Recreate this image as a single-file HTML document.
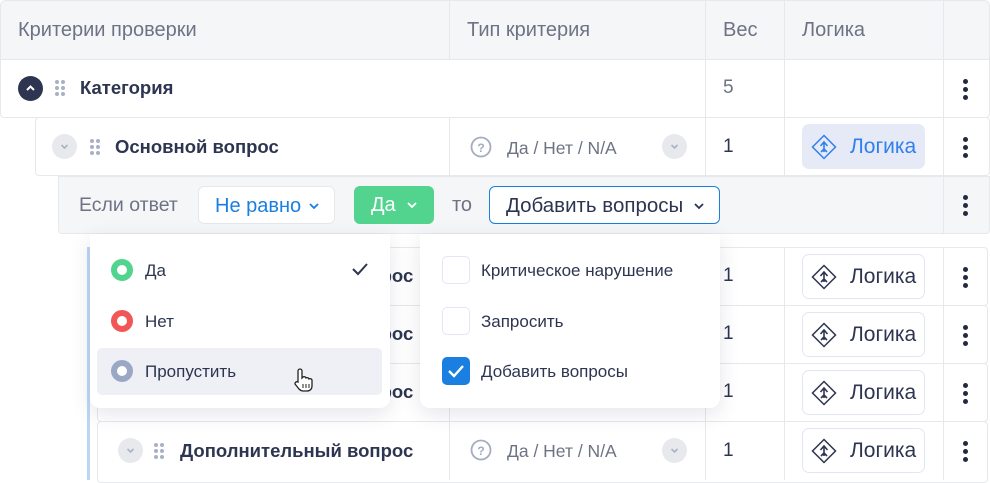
<!DOCTYPE html>
<html><head><meta charset="utf-8"><style>
*{box-sizing:border-box;margin:0;padding:0}
body{width:990px;height:480px;overflow:hidden;background:#fff;font-family:"Liberation Sans",sans-serif;position:relative;color:#2d3550}
.a{position:absolute}
.t{position:absolute;font-size:19px;white-space:nowrap;line-height:20px}
.h{font-size:20px;color:#6d7384}
.s{font-size:17px}
.vl{position:absolute;width:1px;background:#e6e8ec}
.b{font-weight:bold;font-size:18.5px}
.kb{position:absolute;width:5px;left:963px}
.kb i{display:block;width:5px;height:5px;border-radius:50%;background:#232a40;margin-bottom:3px}
.dr{position:absolute;width:10px;height:16px;display:grid;grid-template-columns:4px 4px;gap:2px 2px}
.dr i{display:block;width:4px;height:4px;border-radius:50%;background:#a9b1c6}
.circ{position:absolute;width:25px;height:25px;border-radius:50%;background:#e8e9ec}
.lg{position:absolute;left:802px;width:123px;height:45px;border:1px solid #e2e6f3;border-radius:7px;background:#fff}
.lg .t{font-size:21px}
.row{position:absolute;border:1px solid #e6e8ec;background:#fff;border-radius:4px}
</style></head><body>
<div class="a" style="left:0;top:0;width:990px;height:60px;background:#f5f6f8;border:1px solid #e6e8ec;border-radius:6px 6px 0 0"></div>
<div class="t h" style="left:18px;top:20px">Критерии проверки</div>
<div class="t h" style="left:467px;top:20px">Тип критерия</div>
<div class="t h" style="left:723px;top:20px">Вес</div>
<div class="t h" style="left:802px;top:20px">Логика</div>
<div class="vl" style="left:449px;top:0;height:60px"></div>
<div class="vl" style="left:705px;top:0;height:60px"></div>
<div class="vl" style="left:784px;top:0;height:60px"></div>
<div class="vl" style="left:943px;top:0;height:60px"></div>
<div class="row" style="left:0;top:59px;width:990px;height:59px;border-radius:0 0 4px 4px"></div>
<div class="vl" style="left:705px;top:60px;height:58px"></div>
<div class="vl" style="left:784px;top:60px;height:58px"></div>
<div class="vl" style="left:943px;top:60px;height:58px"></div>
<div class="circ" style="left:18px;top:76px;background:#2d3550"><svg width="25" height="25"><path d="M9 14l3.5-3.5L16 14" stroke="#fff" stroke-width="2" fill="none"/></svg></div>
<div class="dr" style="left:55px;top:80px"><i></i><i></i><i></i><i></i><i></i><i></i></div>
<div class="t b" style="left:80px;top:78px">Категория</div>
<div class="t" style="left:723px;top:78px;color:#6d7384">5</div>
<div class="kb" style="top:79px"><i></i><i></i><i></i></div>
<div class="row" style="left:35px;top:117px;width:955px;height:59px"></div>
<div class="vl" style="left:449px;top:118px;height:58px"></div>
<div class="vl" style="left:705px;top:118px;height:58px"></div>
<div class="vl" style="left:784px;top:118px;height:58px"></div>
<div class="vl" style="left:943px;top:118px;height:58px"></div>
<div class="circ" style="left:52px;top:134px"><svg width="25" height="25"><path d="M9.5 11l3 3 3-3" stroke="#a9b1c6" stroke-width="1.6" fill="none"/></svg></div>
<div class="dr" style="left:90px;top:139px"><i></i><i></i><i></i><i></i><i></i><i></i></div>
<div class="t b" style="left:115px;top:137px">Основной вопрос</div>
<svg class="a" style="left:470px;top:136px" width="22" height="22"><circle cx="11" cy="11" r="9.5" stroke="#a4acc2" stroke-width="1.8" fill="none"/><text x="11" y="16" font-size="12" font-weight="bold" text-anchor="middle" fill="#a4acc2" font-family="Liberation Sans">?</text></svg>
<div class="t" style="left:507px;top:138px;font-size:17.5px;color:#6d7384">Да / Нет / N/A</div>
<div class="circ" style="left:662px;top:134px"><svg width="25" height="25"><path d="M9.5 11l3 3 3-3" stroke="#a9b1c6" stroke-width="1.6" fill="none"/></svg></div>
<div class="t" style="left:723px;top:137px">1</div>
<div class="lg" style="top:124px;background:#e6eaf7;border-color:#e6eaf7"><svg class="a" style="left:8px;top:9px" width="26" height="26"><path d="M13 1.5L24.5 13 13 24.5 1.5 13z" stroke="#2f80ed" stroke-width="1.5" fill="none"/><path d="M13 8v10M9.5 12l3.5-4 3.5 4M13 15l-3 3M13 15l3 3" stroke="#2f80ed" stroke-width="1.6" fill="none"/></svg><div class="t" style="left:47px;top:12px;color:#2f80ed">Логика</div></div>
<div class="kb" style="top:137px"><i></i><i></i><i></i></div>
<div class="a" style="left:58px;top:176px;width:932px;height:58px;background:#f5f6f8;border:1px solid #e6e8ec;border-radius:0 0 4px 4px"></div>
<div class="vl" style="left:943px;top:176px;height:58px"></div>
<div class="t" style="left:79px;top:195px;color:#6d7384;font-size:19.5px">Если ответ</div>
<div class="a" style="left:198px;top:186px;width:137px;height:38px;background:#fff;border:1px solid #e6e8ec;border-radius:6px"><div class="t" style="left:16px;top:9px;color:#1a7fe0;font-size:20px">Не равно</div><svg class="a" style="left:109px;top:14px" width="12" height="10"><path d="M2 3l4 4 4-4" stroke="#1a7fe0" stroke-width="1.8" fill="none"/></svg></div>
<div class="a" style="left:354px;top:186px;width:80px;height:38px;background:#52d48f;border-radius:6px"><div class="t" style="left:17px;top:9px;color:#fff;font-size:20px">Да</div><svg class="a" style="left:52px;top:14px" width="12" height="10"><path d="M2 3l4 4 4-4" stroke="#fff" stroke-width="1.8" fill="none"/></svg></div>
<div class="t" style="left:452px;top:195px;color:#6d7384;font-size:20px">то</div>
<div class="a" style="left:489px;top:186px;width:231px;height:38px;background:#fff;border:1.5px solid #1a7fe0;border-radius:6px"><div class="t" style="left:16px;top:9px;font-size:20.5px">Добавить вопросы</div><svg class="a" style="left:203px;top:14px" width="12" height="10"><path d="M2 3l4 4 4-4" stroke="#2d3550" stroke-width="1.8" fill="none"/></svg></div>
<div class="kb" style="top:195px"><i></i><i></i><i></i></div>
<div class="a" style="left:87px;top:247px;width:3px;height:233px;background:#bcd7f6"></div>
<div class="row" style="left:97px;top:247px;width:891px;height:59px"></div>
<div class="row" style="left:97px;top:305px;width:891px;height:59px"></div>
<div class="row" style="left:97px;top:363px;width:891px;height:59px"></div>
<div class="row" style="left:97px;top:421px;width:891px;height:62px"></div>
<div class="vl" style="left:449px;top:247px;height:233px"></div>
<div class="vl" style="left:705px;top:247px;height:233px"></div>
<div class="vl" style="left:784px;top:247px;height:233px"></div>
<div class="vl" style="left:943px;top:247px;height:233px"></div>
<div class="t b" style="left:180px;top:266px">Дополнительный вопрос</div>
<div class="t b" style="left:180px;top:324px">Дополнительный вопрос</div>
<div class="t b" style="left:180px;top:382px">Дополнительный вопрос</div>
<div class="t" style="left:723px;top:266px">1</div>
<div class="t" style="left:723px;top:324px">1</div>
<div class="t" style="left:723px;top:382px">1</div>
<div class="circ" style="left:118px;top:438px"><svg width="25" height="25"><path d="M9.5 11l3 3 3-3" stroke="#a9b1c6" stroke-width="1.6" fill="none"/></svg></div>
<div class="dr" style="left:154px;top:443px"><i></i><i></i><i></i><i></i><i></i><i></i></div>
<div class="t b" style="left:180px;top:441px">Дополнительный вопрос</div>
<svg class="a" style="left:470px;top:439px" width="22" height="22"><circle cx="11" cy="11" r="9.5" stroke="#a4acc2" stroke-width="1.8" fill="none"/><text x="11" y="16" font-size="12" font-weight="bold" text-anchor="middle" fill="#a4acc2" font-family="Liberation Sans">?</text></svg>
<div class="t" style="left:507px;top:441px;font-size:17.5px;color:#6d7384">Да / Нет / N/A</div>
<div class="circ" style="left:662px;top:438px"><svg width="25" height="25"><path d="M9.5 11l3 3 3-3" stroke="#a9b1c6" stroke-width="1.6" fill="none"/></svg></div>
<div class="t" style="left:723px;top:441px">1</div>
<div class="lg" style="top:254px"><svg class="a" style="left:8px;top:9px" width="26" height="26"><path d="M13 1.5L24.5 13 13 24.5 1.5 13z" stroke="#2d3550" stroke-width="1.5" fill="none"/><path d="M13 8v10M9.5 12l3.5-4 3.5 4M13 15l-3 3M13 15l3 3" stroke="#2d3550" stroke-width="1.6" fill="none"/></svg><div class="t" style="left:47px;top:12px">Логика</div></div>
<div class="lg" style="top:312px"><svg class="a" style="left:8px;top:9px" width="26" height="26"><path d="M13 1.5L24.5 13 13 24.5 1.5 13z" stroke="#2d3550" stroke-width="1.5" fill="none"/><path d="M13 8v10M9.5 12l3.5-4 3.5 4M13 15l-3 3M13 15l3 3" stroke="#2d3550" stroke-width="1.6" fill="none"/></svg><div class="t" style="left:47px;top:12px">Логика</div></div>
<div class="lg" style="top:370px"><svg class="a" style="left:8px;top:9px" width="26" height="26"><path d="M13 1.5L24.5 13 13 24.5 1.5 13z" stroke="#2d3550" stroke-width="1.5" fill="none"/><path d="M13 8v10M9.5 12l3.5-4 3.5 4M13 15l-3 3M13 15l3 3" stroke="#2d3550" stroke-width="1.6" fill="none"/></svg><div class="t" style="left:47px;top:12px">Логика</div></div>
<div class="lg" style="top:428px"><svg class="a" style="left:8px;top:9px" width="26" height="26"><path d="M13 1.5L24.5 13 13 24.5 1.5 13z" stroke="#2d3550" stroke-width="1.5" fill="none"/><path d="M13 8v10M9.5 12l3.5-4 3.5 4M13 15l-3 3M13 15l3 3" stroke="#2d3550" stroke-width="1.6" fill="none"/></svg><div class="t" style="left:47px;top:12px">Логика</div></div>
<div class="kb" style="top:267px"><i></i><i></i><i></i></div>
<div class="kb" style="top:325px"><i></i><i></i><i></i></div>
<div class="kb" style="top:383px"><i></i><i></i><i></i></div>
<div class="kb" style="top:441px"><i></i><i></i><i></i></div>
<div class="a" style="left:90px;top:234px;width:300px;height:174px;background:#fff;border-radius:0 0 10px 10px;box-shadow:0 6px 20px rgba(40,50,80,.12)"></div>
<div class="a" style="left:97px;top:348px;width:285px;height:47px;background:#eef0f5;border-radius:5px"></div>
<div class="a" style="left:111px;top:259px;width:22px;height:22px;border-radius:50%;border:6px solid #52d48f;background:#fff"></div>
<div class="t s" style="left:145px;top:261px">Да</div>
<svg class="a" style="left:351px;top:261px" width="18" height="16"><path d="M2 8l5 5 9-10" stroke="#2d3550" stroke-width="2" fill="none"/></svg>
<div class="a" style="left:111px;top:310px;width:22px;height:22px;border-radius:50%;border:6px solid #f25757;background:#fff"></div>
<div class="t s" style="left:145px;top:312px">Нет</div>
<div class="a" style="left:111px;top:360px;width:22px;height:22px;border-radius:50%;border:6px solid #9ba8c5;background:#fff"></div>
<div class="t s" style="left:145px;top:362px">Пропустить</div>
<svg class="a" style="left:291px;top:367px" width="24" height="26"><path d="M7 13V4a2 2 0 014 0v7l1-1a2 2 0 013 1 2 2 0 013 1 2 2 0 013 1v6c0 3-2 5-5 5h-4c-2 0-3-1-4-2l-4-5a2 2 0 013-2z" fill="#fff" stroke="#222" stroke-width="1.3"/><path d="M12 17v4M15 17v4M18 17v4" stroke="#222" stroke-width="1"/></svg>
<div class="a" style="left:420px;top:234px;width:300px;height:174px;background:#fff;border-radius:0 0 10px 10px;box-shadow:0 6px 20px rgba(40,50,80,.12)"></div>
<div class="a" style="left:442px;top:256px;width:28px;height:28px;border:1.5px solid #e3e7f3;border-radius:5px"></div>
<div class="t s" style="left:481px;top:261px">Критическое нарушение</div>
<div class="a" style="left:442px;top:307px;width:28px;height:28px;border:1.5px solid #e3e7f3;border-radius:5px"></div>
<div class="t s" style="left:481px;top:312px">Запросить</div>
<div class="a" style="left:442px;top:357px;width:28px;height:28px;background:#1a7fe0;border-radius:5px"><svg width="28" height="28"><path d="M7 14l5 5 9-10" stroke="#fff" stroke-width="2.4" fill="none"/></svg></div>
<div class="t s" style="left:481px;top:362px">Добавить вопросы</div>
</body></html>
